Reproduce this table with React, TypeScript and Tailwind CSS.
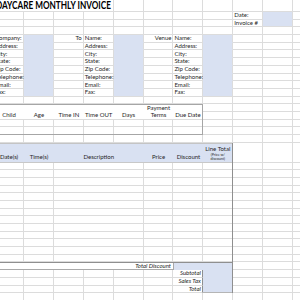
import type { ReactNode } from 'react'
import { twMerge } from 'tailwind-merge'

const W: Record<number, string> = {
  1: 'w-[29.9px]',
  2: 'w-[59.8px]',
  3: 'w-[89.7px]',
  4: 'w-[119.6px]',
  6: 'w-[179.4px]',
}

function Cell({ span = 1, className = '', children }: { span?: number; className?: string; children?: ReactNode }) {
  return (
    <div
      className={twMerge(
        'shrink-0 h-full flex items-center whitespace-nowrap border-r border-b border-[#dcdcdc] px-[1px]',
        W[span],
        className,
      )}
    >
      {children}
    </div>
  )
}

const blanks = (n: number, key: string, cls = '') =>
  Array.from({ length: n }, (_, i) => <Cell key={key + i} className={cls} />)

const leftLabels = ['Company:', 'Address:', 'City:', 'State:', 'Zip Code:', 'Telephone:', 'Email:', 'Fax:']
const nameLabels = ['Name:', 'Address:', 'City:', 'State:', 'Zip Code:', 'Telephone:', 'Email:', 'Fax:']
const careCols = ['Child', 'Age', 'Time IN', 'Time OUT', 'Days']
const totals = ['Subtotal', 'Sales Tax', 'Total']

export default function App() {
  return (
    <div className="w-[300px] h-[300px] overflow-hidden bg-white font-['Lato',sans-serif] text-[6px] leading-none text-[#262626]">
      <div className="-ml-[5.9px] w-[330px] flex flex-col">
        {/* title */}
        <div className="flex h-[12px]">
          <Cell span={4} className="text-[10.5px] font-bold text-black pl-[2px]">
            <span className="inline-block origin-left scale-x-[0.78]">DAYCARE MONTHLY INVOICE</span>
          </Cell>
          {blanks(7, 't')}
        </div>

        {/* date / invoice */}
        {['Date:', 'Invoice #'].map((label, i) => (
          <div key={label} className="flex h-[7.7px]">
            {blanks(8, 'd' + i)}
            <Cell>{label}</Cell>
            <Cell className={i === 0 ? 'bg-[#d9e1f2] border-b-[#d9e1f2]' : 'bg-[#d9e1f2]'} />
            <Cell />
          </div>
        ))}
        <div className="flex h-[7.7px]">{blanks(11, 'e')}</div>

        {/* from / to / venue */}
        {leftLabels.map((label, i) => {
          const blue = i < 7 ? 'bg-[#d9e1f2] border-b-[#d9e1f2]' : 'bg-[#d9e1f2]'
          return (
            <div key={label} className="flex h-[7.7px]">
              <Cell>{label}</Cell>
              <Cell className={blue} />
              <Cell className="justify-end">{i === 0 ? 'To' : ''}</Cell>
              <Cell>{nameLabels[i]}</Cell>
              <Cell className={blue} />
              <Cell className="justify-end">{i === 0 ? 'Venue' : ''}</Cell>
              <Cell>{nameLabels[i]}</Cell>
              <Cell className={blue} />
              {blanks(3, 'l' + i)}
            </div>
          )
        })}
        <div className="flex h-[7.7px]">{blanks(11, 'f')}</div>

        {/* care table */}
        <div className="flex">
          <div className="shrink-0 w-[209.3px] flex flex-col border-t border-r border-b border-[#a6a6a6]">
            <div className="flex h-[14.4px]">
              {careCols.map((c) => (
                <Cell key={c} className="border-r-0 justify-center items-end pb-[1px]">
                  {c}
                </Cell>
              ))}
              <Cell className="border-r-0 flex-col justify-end items-center pb-[1px]">
                <span className="leading-[7.5px]">Payment</span>
                <span>Terms</span>
              </Cell>
              <Cell className="w-[28.9px] border-r-0 justify-center items-end pb-[1px]">Due Date</Cell>
            </div>
            <div className="flex h-[7.7px]">
              {blanks(6, 'c1')}
              <Cell className="w-[28.9px] border-r-0" />
            </div>
            <div className="flex h-[6.7px]">
              {blanks(6, 'c2', 'border-b-0')}
              <Cell className="w-[28.9px] border-r-0 border-b-0" />
            </div>
          </div>
          <div className="flex flex-col">
            {[0, 1, 2, 3].map((r) => (
              <div key={r} className="flex h-[7.7px]">
                {blanks(4, 'cr' + r)}
              </div>
            ))}
          </div>
        </div>
        <div className="flex h-[7.7px]">{blanks(11, 'g')}</div>

        {/* items table */}
        <div className="flex">
          <div className="shrink-0 w-[239.2px] flex flex-col border-r border-[#8f8f8f]">
            <div className="flex h-[19.8px] bg-[#d9e1f2] border-t border-[#c4c4c4]">
              <Cell className="border-r-0 border-[#c8c8c8] justify-center items-end pb-[1.5px]">Date(s)</Cell>
              <Cell className="border-r-0 border-[#c8c8c8] justify-center items-end pb-[1.5px]">Time(s)</Cell>
              <Cell span={3} className="border-r-0 border-[#c8c8c8] justify-center items-end pb-[1.5px]">
                Description
              </Cell>
              <Cell className="border-r-0 border-[#c8c8c8] justify-center items-end pb-[1.5px]">Price</Cell>
              <Cell className="border-r-0 border-[#c8c8c8] justify-center items-end pb-[1.5px]">Discount</Cell>
              <Cell className="w-[28.9px] border-r-0 border-[#c8c8c8] flex-col justify-start items-center pt-[2px]">
                <span>Line Total</span>
                <span className="mt-[1.5px] text-[3.6px] leading-[4px]">(Price w/</span>
                <span className="text-[3.6px] leading-[4px]">discount)</span>
              </Cell>
            </div>
            {Array.from({ length: 13 }, (_, r) => (
              <div key={r} className="flex h-[7.7px]">
                <Cell />
                <Cell />
                <Cell span={3} />
                <Cell />
                <Cell />
                <Cell className="w-[28.9px] border-r-0" />
              </div>
            ))}
            <div className="flex h-[7.7px] border-t border-[#8f8f8f]">
              <Cell span={6} className="justify-end italic border-[#a9a9a9] pr-[1.5px]">
                Total Discount
              </Cell>
              <Cell className="w-[58.8px] border-r-0 bg-[#d9e1f2] border-b-[#d9e1f2]" />
            </div>
            {totals.map((t, i) => (
              <div key={t} className="flex h-[7.7px]">
                {blanks(6, 'tt' + i)}
                <Cell className="justify-end italic border-r-[#8f8f8f] pr-[1.5px]">{t}</Cell>
                <Cell
                  className={
                    i < 2
                      ? 'w-[28.9px] border-r-0 bg-[#d9e1f2] border-b-[#d9e1f2]'
                      : 'w-[28.9px] border-r-0 bg-[#d9e1f2] border-b-[#b5b5b5]'
                  }
                />
              </div>
            ))}
          </div>
          <div className="flex flex-col">
            <div className="flex h-[19.8px]">{blanks(3, 'ih')}</div>
            {Array.from({ length: 17 }, (_, r) => (
              <div key={r} className="flex h-[7.7px]">
                {blanks(3, 'ir' + r)}
              </div>
            ))}
          </div>
        </div>
        {[0, 1].map((r) => (
          <div key={r} className="flex h-[7.7px]">
            {blanks(11, 'z' + r)}
          </div>
        ))}
      </div>
    </div>
  )
}
